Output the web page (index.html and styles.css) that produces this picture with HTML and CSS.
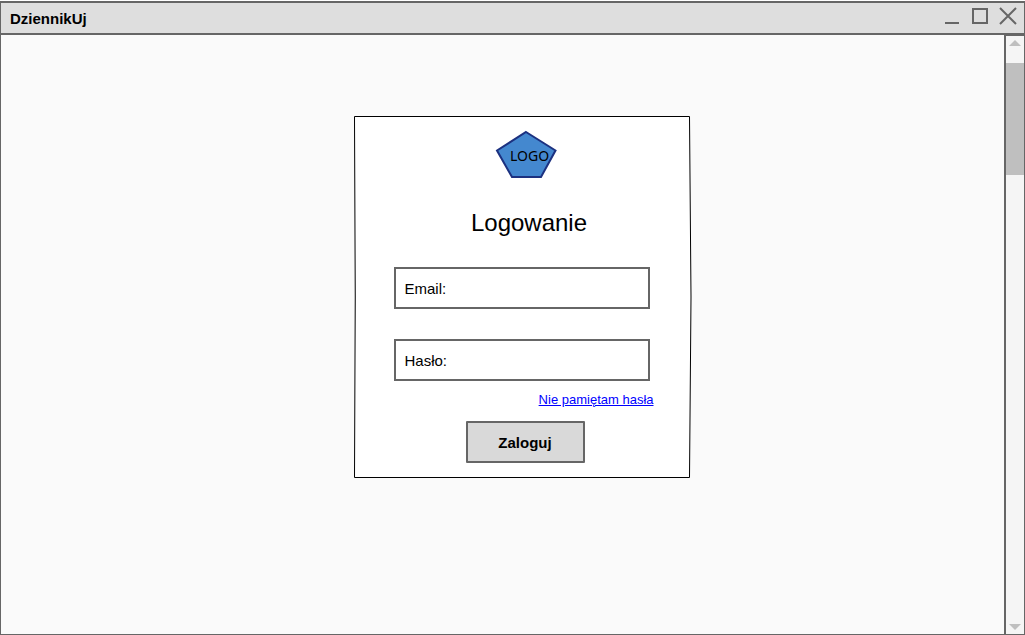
FILE: index.html
```html
<!DOCTYPE html>
<html lang="pl">
<head>
<meta charset="utf-8">
<title>DziennikUj</title>
<link rel="stylesheet" href="styles.css">
</head>
<body>
<div class="window">
  <header class="titlebar">
    <h1 class="app-name">DziennikUj</h1>
    <div class="controls">
      <button class="control" type="button" aria-label="Minimalizuj"><svg width="18" height="18" viewBox="0 0 18 18"><path d="M2 16H16"/></svg></button>
      <button class="control" type="button" aria-label="Maksymalizuj"><svg width="18" height="18" viewBox="0 0 18 18"><path d="M2 2H16V16H2Z"/></svg></button>
      <button class="control" type="button" aria-label="Zamknij"><svg width="18" height="18" viewBox="0 0 18 18"><path d="M1 1L17 17M17 1L1 17"/></svg></button>
    </div>
  </header>
  <div class="body">
    <main class="content">
      <form class="card">
        <svg class="card-shape" viewBox="0 0 338 362" preserveAspectRatio="none" aria-hidden="true"><path d="M0.5 0.5H335.5Q338.5 181 335.5 361.5H0.5Q2 181 0.5 0.5Z"/></svg>
        <svg class="logo" width="62" height="50" viewBox="0 0 62 50" role="img" aria-label="LOGO"><path d="M31 2L60.500 20.500L46 47H17L2 20.500Z"/><text x="15" y="31">LOGO</text></svg>
        <h2 class="heading">Logowanie</h2>
        <div class="field"><label for="email">Email:</label><input id="email" type="email"></div>
        <div class="field"><label for="password">Hasło:</label><input id="password" type="password"></div>
        <a class="forgot" href="#">Nie pamiętam hasła</a>
        <button class="submit" type="submit">Zaloguj</button>
      </form>
    </main>
    <div class="scrollbar">
      <button class="arrow" type="button" aria-label="W górę"><svg width="12" height="6" viewBox="0 0 12 6"><path d="M0 6L6 0L12 6Z"/></svg></button>
      <div class="thumb"></div>
      <button class="arrow arrow-down" type="button" aria-label="W dół"><svg width="12" height="6" viewBox="0 0 12 6"><path d="M0 0H12L6 6Z"/></svg></button>
    </div>
  </div>
</div>
</body>
</html>
```
FILE: styles.css
```css
* {
  box-sizing: border-box;
}

body {
  margin: 0;
  padding-top: 1px;
  min-height: 100vh;
  display: flex;
  background: #fff;
  color: #000;
  font: 15px/18px "Liberation Sans", Arial, sans-serif;
}

button {
  font: inherit;
  color: inherit;
  cursor: pointer;
}

.window {
  flex: 1;
  display: flex;
  flex-direction: column;
  border: 1px solid #666;
  border-top-width: 2px;
  background: #fafafa;
}

.titlebar {
  display: flex;
  justify-content: space-between;
  align-items: center;
  height: 32px;
  padding: 0 7px 0 9px;
  border-bottom: 2px solid #666;
  background: #dedede;
}

.app-name {
  margin: 0;
  padding-top: 2px;
  font-size: 15px;
  font-weight: bold;
}

.controls {
  display: flex;
  gap: 10px;
  padding-bottom: 4px;
}

.control {
  display: flex;
  padding: 0;
  border: 0;
  background: none;
}

.control path {
  fill: none;
  stroke: #666;
  stroke-width: 2;
}

.body {
  flex: 1;
  display: flex;
}

.content {
  flex: 1;
  display: flex;
  justify-content: center;
  align-items: flex-start;
  padding: 81px 0 40px 40px;
}

.card {
  position: relative;
  display: flex;
  flex-direction: column;
  align-items: center;
  width: 338px;
  padding: 14px 42px 15px 40px;
}

.card-shape {
  position: absolute;
  inset: 0;
  width: 100%;
  height: 100%;
}

.card-shape path {
  fill: #fff;
  stroke: #000;
}

.card > :not(.card-shape) {
  position: relative;
}

.logo {
  margin-left: 8px;
}

.logo path {
  fill: #4488cf;
  stroke: #1c3180;
  stroke-width: 2;
}

.logo text {
  font: 14px "Noto Sans", sans-serif;
}

.heading {
  margin: 28px 0 29px;
  padding-left: 15px;
  font-size: 24px;
  font-weight: normal;
  line-height: 30px;
}

.field {
  display: flex;
  align-items: center;
  gap: 6px;
  width: 100%;
  height: 42px;
  padding: 2px 9px 0;
  border: 2px solid #666;
  background: #fff;
}

.field + .field {
  margin-top: 30px;
}

.field input {
  flex: 1;
  min-width: 0;
  padding: 0;
  border: 0;
  outline: 0;
  background: none;
  font: inherit;
}

.forgot {
  align-self: flex-end;
  margin: 10px -4px 12px 0;
  color: #00f;
  font-size: 13px;
}

.submit {
  width: 119px;
  height: 42px;
  margin-left: 7px;
  padding: 2px 0 0;
  border: 2px solid #666;
  border-radius: 1px;
  background: #d9d9d9;
  font-weight: bold;
}

.scrollbar {
  display: flex;
  flex-direction: column;
  width: 20px;
  border-top: 1px solid #666;
  border-left: 2px solid #666;
  background: #f5f5f5;
}

.arrow {
  display: flex;
  justify-content: center;
  height: 27px;
  padding: 4px 0;
  border: 0;
  background: none;
}

.arrow path {
  fill: #bfbfbf;
}

.arrow-down {
  align-items: flex-end;
  margin-top: auto;
}

.thumb {
  height: 112px;
  background: #bfbfbf;
}
```
